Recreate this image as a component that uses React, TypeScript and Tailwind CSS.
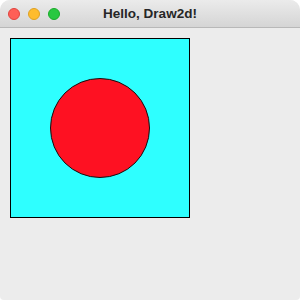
export default function App() {
  return (
    <div className="w-[300px] h-[300px] bg-white">
      <div className="w-full h-full flex flex-col bg-[#ececec] rounded-t-[10px] rounded-b-[4px] overflow-hidden">
        {/* Title bar */}
        <div className="relative h-[28px] shrink-0 flex items-center justify-center bg-gradient-to-b from-[#ebebeb] to-[#d5d5d5] border-b border-[#b8b8b8]">
          <div className="absolute left-[8px] top-[8px] flex gap-[8px]">
            <div className="w-[12px] h-[12px] rounded-full bg-[#fe5f57] border border-[#e0443e]"></div>
            <div className="w-[12px] h-[12px] rounded-full bg-[#febc2e] border border-[#dea123]"></div>
            <div className="w-[12px] h-[12px] rounded-full bg-[#28c840] border border-[#1aab29]"></div>
          </div>
          <div className="text-[13.5px] font-bold text-[#262626] font-['Liberation_Sans',Arial,sans-serif] leading-none">
            Hello, Draw2d!
          </div>
        </div>

        {/* Canvas */}
        <div className="pl-[10px] pt-[10px]">
          <div className="w-[180px] h-[180px] bg-[#2effff] border border-black flex items-center justify-center">
            <div className="w-[100px] h-[100px] rounded-full bg-[#fe1122] border border-[#111]"></div>
          </div>
        </div>
      </div>
    </div>
  )
}
